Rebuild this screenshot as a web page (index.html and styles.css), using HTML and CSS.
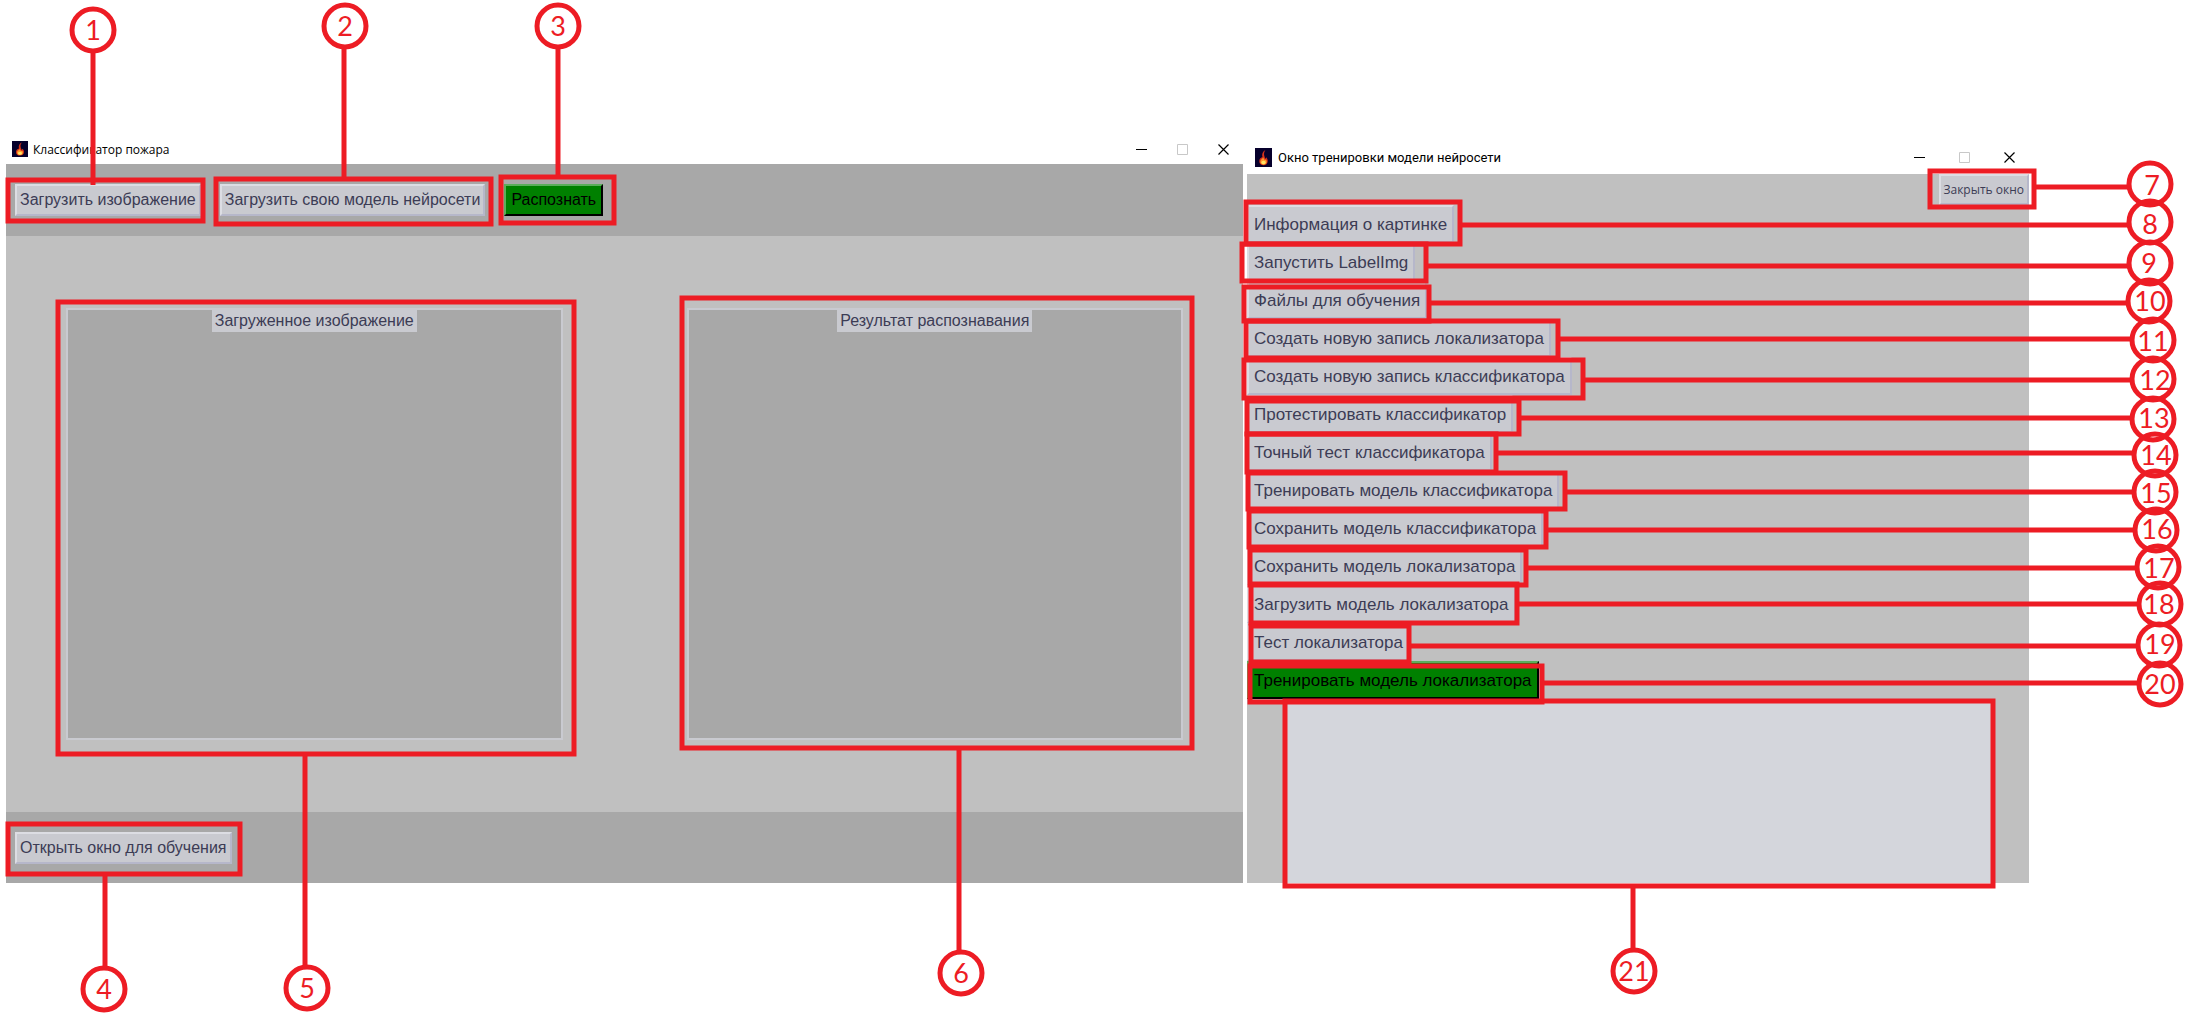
FILE: index.html
```html
<!DOCTYPE html>
<html lang="ru">
<head>
<meta charset="utf-8">
<title>Классификатор пожара</title>
<link rel="stylesheet" href="styles.css">
</head>
<body>
<svg class="symbols" aria-hidden="true">
  <symbol id="flame" viewBox="0 0 16 16" preserveAspectRatio="none">
    <rect width="16" height="16" fill="#06002c"/>
    <path d="M9.800 1.600C7.200 2.800 6.200 5 7 7.600 5.200 8.200 4 9.400 4 11.200 4 13.400 5.800 14.600 8 14.600s4-1.300 4-3.600c0-1.600-.8-2.600-1.500-3.200-.1.700-.4 1.100-.9 1.300C9.300 7.200 7.200 4.800 9.800 1.600Z" fill="#d8321a"/>
    <path d="M8 8C7 9 5 9.600 5 11.600 5 13 6.400 14 8 14s3-1 3-2.400c0-.8-.3-1.400-.8-1.900C9.200 10.400 8.200 9.600 8 8Z" fill="#ff9a2b"/>
    <ellipse cx="8" cy="12.200" rx="2" ry="1.500" fill="#ffe566"/>
  </symbol>
  <symbol id="minimize" viewBox="0 0 11 11"><path d="M0 5.500H11" stroke="#000"/></symbol>
  <symbol id="maximize" viewBox="0 0 11 11"><path d="M.5.500H10.500V10.500H.5Z" fill="none" stroke="#c8c8c8"/></symbol>
  <symbol id="close" viewBox="0 0 11 11"><path d="M.5.500 10.500 10.500M10.500.500.500 10.500" fill="none" stroke="#000" stroke-width="1.200"/></symbol>
</svg>

<main class="desktop">
  <section class="window window-main">
    <header class="titlebar">
      <svg class="app-icon"><use href="#flame"/></svg>
      <h1 class="title">Классификатор пожара</h1>
      <div class="controls">
        <button class="control" aria-label="Свернуть"><svg><use href="#minimize"/></svg></button>
        <button class="control" aria-label="Развернуть" disabled><svg><use href="#maximize"/></svg></button>
        <button class="control" aria-label="Закрыть"><svg><use href="#close"/></svg></button>
      </div>
    </header>
    <div class="toolbar">
      <button class="btn">Загрузить изображение</button>
      <button class="btn">Загрузить свою модель нейросети</button>
      <button class="btn btn-go">Распознать</button>
    </div>
    <div class="panels">
      <figure class="panel"><figcaption class="caption">Загруженное изображение</figcaption></figure>
      <figure class="panel"><figcaption class="caption">Результат распознавания</figcaption></figure>
    </div>
    <footer class="toolbar toolbar-bottom">
      <button class="btn">Открыть окно для обучения</button>
    </footer>
  </section>

  <section class="window window-train">
    <header class="titlebar titlebar-large">
      <svg class="app-icon app-icon-large"><use href="#flame"/></svg>
      <h2 class="title title-large">Окно тренировки модели нейросети</h2>
      <div class="controls">
        <button class="control" aria-label="Свернуть"><svg><use href="#minimize"/></svg></button>
        <button class="control" aria-label="Развернуть" disabled><svg><use href="#maximize"/></svg></button>
        <button class="control" aria-label="Закрыть"><svg><use href="#close"/></svg></button>
      </div>
    </header>
    <div class="train-body">
      <button class="btn btn-close">Закрыть окно</button>
      <div class="actions">
        <button class="btn btn-row">Информация о картинке</button>
        <button class="btn btn-row">Запустить LabelImg</button>
        <button class="btn btn-row">Файлы для обучения</button>
        <button class="btn btn-row">Создать новую запись локализатора</button>
        <button class="btn btn-row">Создать новую запись классификатора</button>
        <button class="btn btn-row">Протестировать классификатор</button>
        <button class="btn btn-row">Точный тест классификатора</button>
        <button class="btn btn-row">Тренировать модель классификатора</button>
        <button class="btn btn-row">Сохранить модель классификатора</button>
        <button class="btn btn-row">Сохранить модель локализатора</button>
        <button class="btn btn-row">Загрузить модель локализатора</button>
        <button class="btn btn-row">Тест локализатора</button>
        <button class="btn btn-row btn-go">Тренировать модель локализатора</button>
      </div>
      <textarea class="log" aria-label="Журнал обучения"></textarea>
    </div>
  </section>
</main>

<svg class="callouts" viewBox="0 0 2190 1020">
  <g class="lines">
    <rect x="8" y="180" width="195" height="41"/><path d="M93 53V185"/><circle cx="93" cy="30" r="21"/>
    <rect x="216" y="179" width="275" height="45"/><path d="M344 49V178"/><circle cx="345" cy="26" r="21"/>
    <rect x="501" y="177" width="113" height="46"/><path d="M558 49V177"/><circle cx="558" cy="26" r="21"/>
    <rect x="8" y="824" width="232" height="50"/><path d="M105 876V967"/><circle cx="104" cy="989" r="21"/>
    <rect x="58" y="302" width="516" height="452"/><path d="M305 756V966"/><circle cx="307" cy="988" r="21"/>
    <rect x="682" y="298" width="510" height="450"/><path d="M959 750V951"/><circle cx="961" cy="973" r="21"/>
    <rect x="1930" y="171" width="104" height="36"/><path d="M2036 187H2128"/><circle cx="2150" cy="184" r="21"/>
    <rect x="1246" y="202" width="214" height="42"/><path d="M1462 225H2128"/><circle cx="2150" cy="222" r="21"/>
    <rect x="1242" y="244" width="184" height="37"/><path d="M1428 266H2128"/><circle cx="2150" cy="263" r="21"/>
    <rect x="1244" y="287" width="185" height="34"/><path d="M1431 303H2127"/><circle cx="2149" cy="301" r="21"/>
    <rect x="1246" y="321" width="312" height="37"/><path d="M1560 339H2131"/><circle cx="2153" cy="340" r="21"/>
    <rect x="1244" y="360" width="339" height="38"/><path d="M1585 380H2131"/><circle cx="2153" cy="379" r="21"/>
    <rect x="1247" y="401" width="272" height="33"/><path d="M1521 418H2131"/><circle cx="2153" cy="419" r="21"/>
    <rect x="1247" y="434" width="249" height="38"/><path d="M1498 453H2133"/><circle cx="2155" cy="455" r="21"/>
    <rect x="1248" y="473" width="317" height="36"/><path d="M1567 492H2133"/><circle cx="2155" cy="492" r="21"/>
    <rect x="1249" y="511" width="297" height="36"/><path d="M1548 530H2134"/><circle cx="2156" cy="530" r="21"/>
    <rect x="1250" y="550" width="276" height="35"/><path d="M1528 568H2136"/><circle cx="2158" cy="567" r="21"/>
    <rect x="1251" y="584" width="266" height="39"/><path d="M1519 604H2138"/><circle cx="2160" cy="604" r="21"/>
    <rect x="1251" y="626" width="158" height="36"/><path d="M1411 646H2137"/><circle cx="2159" cy="645" r="21"/>
    <rect x="1250" y="666" width="292" height="36"/><path d="M1544 683H2138"/><circle cx="2160" cy="684" r="21"/>
    <rect x="1285" y="701" width="708" height="185"/><path d="M1633 888V949"/><circle cx="1634" cy="971" r="21"/>
  </g>
  <g class="numbers">
    <text x="93" y="40">1</text><text x="345" y="36">2</text><text x="558" y="36">3</text>
    <text x="104" y="999">4</text><text x="307" y="998">5</text><text x="961" y="983">6</text>
    <text x="2152" y="195">7</text><text x="2150" y="234">8</text><text x="2149" y="273">9</text>
    <text x="2150" y="311">10</text><text x="2153" y="351">11</text><text x="2155" y="390">12</text>
    <text x="2154" y="428">13</text><text x="2156" y="465">14</text><text x="2156" y="503">15</text>
    <text x="2157" y="539">16</text><text x="2159" y="578">17</text><text x="2159" y="614">18</text>
    <text x="2160" y="654">19</text><text x="2160" y="694">20</text><text x="1634" y="981">21</text>
  </g>
</svg>
</body>
</html>
```
FILE: styles.css
```css
* {
  box-sizing: border-box;
}

body {
  position: relative;
  min-height: 1020px;
  margin: 0;
  background: #fff;
  font-family: "Liberation Sans", Arial, sans-serif;
}

.symbols {
  display: none;
}

.desktop {
  display: flex;
  align-items: flex-end;
  gap: 4px;
  padding: 134px 161px 0 6px;
}

.window {
  min-width: 0;
}

.window-main {
  flex: 1237 1 0;
}

.window-train {
  flex: 782 1 0;
}

/* Title bars */

.titlebar {
  display: flex;
  align-items: center;
  gap: 5px;
  height: 30px;
  padding: 0 14px 0 6px;
}

.titlebar-large {
  gap: 6px;
  height: 34px;
  padding-left: 8px;
}

.app-icon {
  width: 16px;
  height: 16px;
}

.app-icon-large {
  width: 17px;
  height: 19px;
}

.title {
  flex: 1;
  margin: 0;
  color: #000;
  font-family: "Open Sans", "Noto Sans", sans-serif;
  font-size: 12px;
  font-weight: 400;
}

.title-large {
  font-family: Roboto, "Open Sans", sans-serif;
  font-size: 13px;
}

.controls {
  display: flex;
  gap: 30px;
}

.titlebar-large .controls {
  gap: 34px;
}

.control {
  display: flex;
  padding: 0;
  border: 0;
  background: none;
}

.control svg {
  width: 11px;
  height: 11px;
}

/* Buttons */

.btn {
  height: 32px;
  padding: 0 3px;
  border: 2px solid;
  border-color: #dcdde3 #b6b7ca #b6b7ca #dcdde3;
  background: #c9cad0;
  color: #3c3c55;
  font-family: inherit;
  font-size: 16px;
  white-space: nowrap;
}

.btn-go {
  padding: 0 5px;
  border-color: #5cae5c #000 #000 #5cae5c;
  background: #008000;
  color: #000;
}

.btn-row {
  height: 38px;
  padding: 2px 5px 0;
  font-size: 17px;
}

.btn-close {
  align-self: flex-end;
  height: 31px;
  font-family: "Open Sans", "Noto Sans", sans-serif;
  font-size: 12px;
}

/* Main window */

.toolbar {
  display: flex;
  gap: 19px;
  padding: 20px 9px;
  background: #a8a8a8;
}

.toolbar-bottom {
  padding-bottom: 19px;
}

.panels {
  display: flex;
  gap: 124px;
  padding: 72px 60px;
  background: #c0c0c0;
}

.panel {
  flex: 1;
  display: flex;
  justify-content: center;
  align-items: flex-start;
  min-height: 432px;
  margin: 0;
  border: 2px solid #c9cad0;
  background: #a8a8a8;
}

.caption {
  padding: 0 3px;
  background: #c9cad0;
  color: #3c3c55;
  font-size: 16px;
  line-height: 22px;
}

/* Training window */

.train-body {
  display: flex;
  flex-direction: column;
  background: #c0c0c0;
}

.actions {
  display: flex;
  flex-direction: column;
  align-items: flex-start;
}

.log {
  height: 184px;
  margin: 0 36px;
  border: 0;
  background: #d4d6dc;
  resize: none;
}

/* Numbered callouts over both windows */

.callouts {
  position: absolute;
  top: 0;
  left: 0;
  width: 2190px;
  height: 1020px;
  pointer-events: none;
}

.lines {
  fill: none;
  stroke: #ed1c24;
  stroke-width: 5;
}

.numbers {
  fill: #ed1c24;
  font-family: Lato, sans-serif;
  font-size: 27px;
  font-weight: 400;
  text-anchor: middle;
}
```
